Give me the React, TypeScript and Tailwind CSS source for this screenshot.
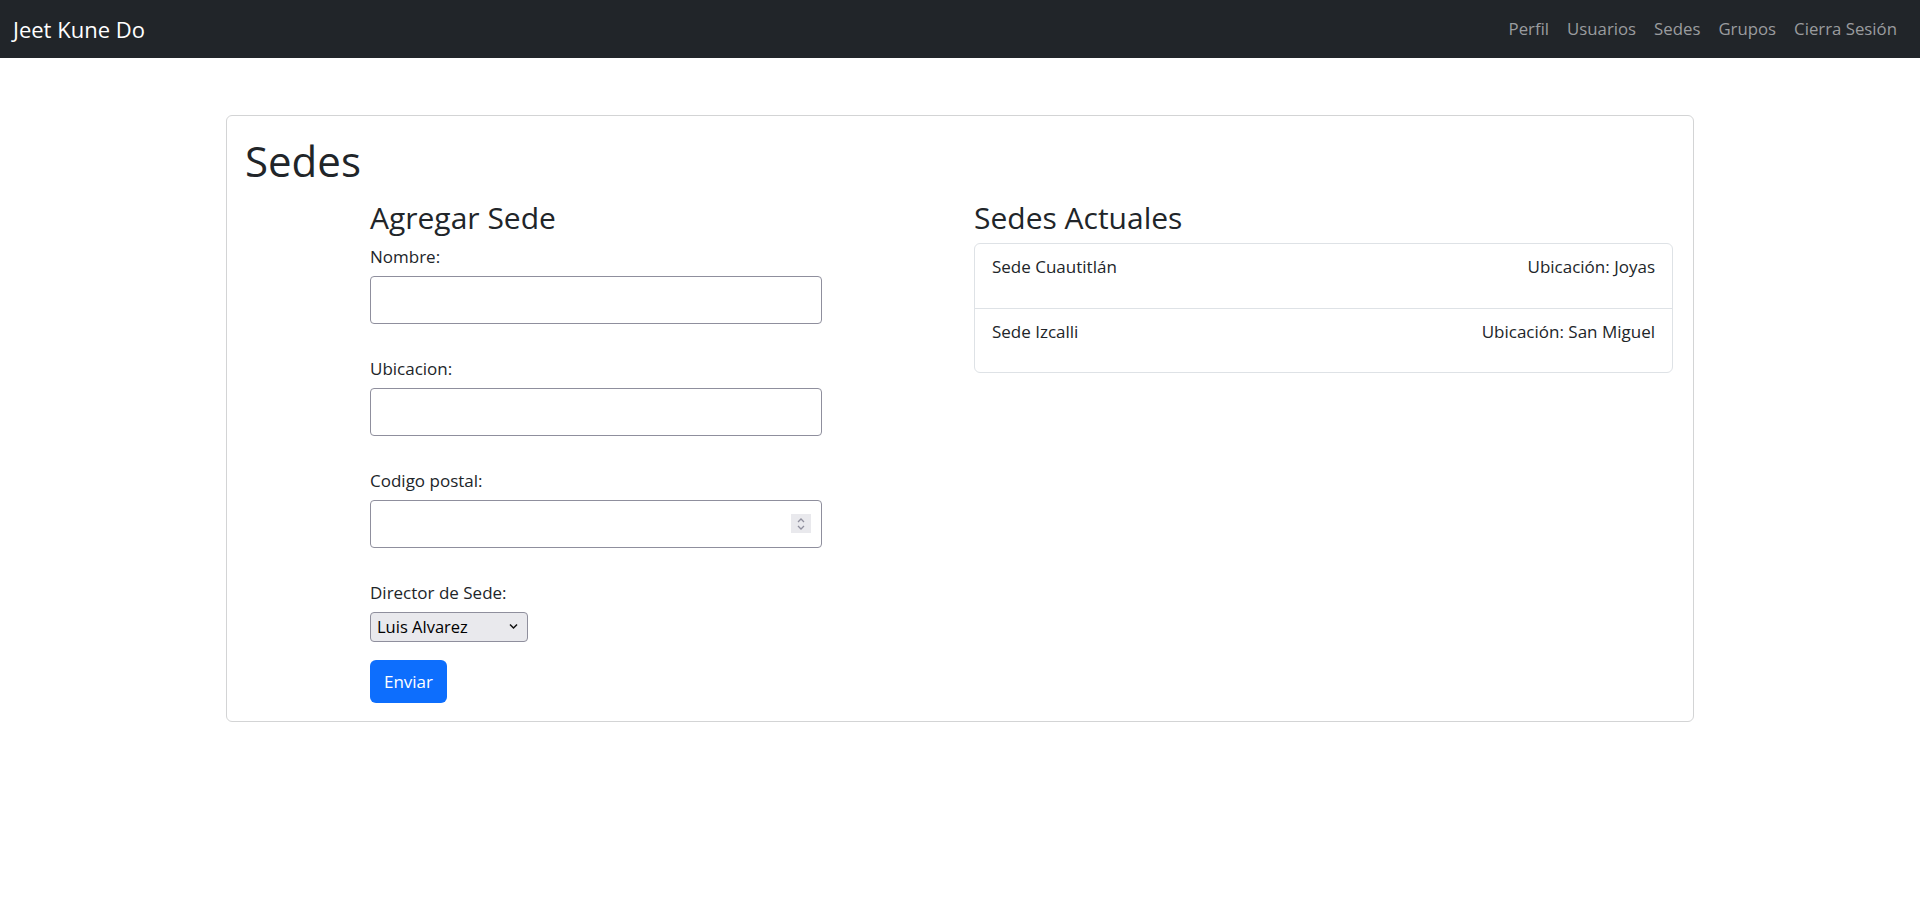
import React from 'react';

const sedes = [
  { nombre: 'Sede Cuautitlán', ubicacion: 'Joyas' },
  { nombre: 'Sede Izcalli', ubicacion: 'San Miguel' },
];

const links = ['Perfil', 'Usuarios', 'Sedes', 'Grupos', 'Cierra Sesión'];

function Navbar() {
  return (
    <nav className="flex h-[58px] items-center justify-between bg-[#212529] pl-[13px] pr-[23px]">
      <a className="text-[22px] leading-[30px] text-white">Jeet Kune Do</a>
      <div className="flex items-center gap-[18px]">
        {links.map((l) => (
          <a key={l} className="text-[16.8px] leading-[26px] text-[#9a9c9f]">
            {l}
          </a>
        ))}
      </div>
    </nav>
  );
}

function Field({ label, children }: { label: string; children: React.ReactNode }) {
  return (
    <div className="mb-[32px]">
      <label className="mb-[6px] block text-[17px] leading-[26px]">{label}</label>
      {children}
    </div>
  );
}

function TextInput() {
  return (
    <input
      type="text"
      className="block h-[48px] w-[452px] rounded-[4px] border border-[#8f8f9d] bg-white px-2 text-[17px] outline-none"
    />
  );
}

function NumberInput() {
  return (
    <div className="relative w-[452px]">
      <input
        type="text"
        className="block h-[48px] w-full rounded-[4px] border border-[#8f8f9d] bg-white px-2 text-[17px] outline-none"
      />
      <span className="absolute right-[11px] top-[14px] flex h-[19px] w-[20px] items-center justify-center bg-[#e9e9ed]">
        <svg width="10" height="14" viewBox="0 0 10 14" fill="none" stroke="#8f8f9d" strokeWidth="1.3">
          <path d="M2 5 L5 2 L8 5" />
          <path d="M2 9 L5 12 L8 9" />
        </svg>
      </span>
    </div>
  );
}

function SelectDirector() {
  return (
    <div className="relative w-[158px]">
      <select className="block h-[30px] w-full appearance-none rounded-[4px] border border-[#8f8f9d] bg-[#e9e9ed] pl-[6px] pr-6 text-[16.5px] text-black outline-none">
        <option>Luis Alvarez</option>
      </select>
      <svg
        className="pointer-events-none absolute right-[10px] top-[11px]"
        width="9"
        height="7"
        viewBox="0 0 9 7"
        fill="none"
        stroke="#111"
        strokeWidth="1.5"
      >
        <path d="M1 1.5 L4.5 5 L8 1.5" />
      </svg>
    </div>
  );
}

export default function App() {
  return (
    <div className="min-h-screen bg-white font-['Open_Sans',sans-serif] text-[#212529]">
      <Navbar />
      <main className="pt-[57px]">
        <div className="mx-auto w-[1468px] rounded-[6px] border border-[#d3d4d5] px-[18px] pb-[18px] pt-[20px]">
          <h1 className="mb-[14px] text-[42px] leading-[50px]">Sedes</h1>
          <div className="flex">
            <div className="ml-[125px] w-[452px]">
              <h3 className="mb-[8px] text-[30px] leading-[36px]">Agregar Sede</h3>
              <form onSubmit={(e) => e.preventDefault()}>
                <Field label="Nombre:">
                  <TextInput />
                </Field>
                <Field label="Ubicacion:">
                  <TextInput />
                </Field>
                <Field label="Codigo postal:">
                  <NumberInput />
                </Field>
                <label className="mb-[6px] block text-[17px] leading-[26px]">Director de Sede:</label>
                <SelectDirector />
                <button
                  type="submit"
                  className="mt-[18px] flex h-[43px] w-[77px] items-center justify-center rounded-[6px] bg-[#0d6efd] text-[17px] text-white"
                >
                  Enviar
                </button>
              </form>
            </div>
            <div className="ml-[152px] w-[699px]">
              <h3 className="mb-[7px] text-[30px] leading-[36px]">Sedes Actuales</h3>
              <ul className="rounded-[6px] border border-[#dee2e6]">
                {sedes.map((s, i) => (
                  <li
                    key={s.nombre}
                    className={`flex h-[64px] justify-between px-[17px] pt-[10px] text-[17px] leading-[26px] ${
                      i > 0 ? 'border-t border-[#dee2e6]' : ''
                    }`}
                  >
                    <span>{s.nombre}</span>
                    <span>Ubicación: {s.ubicacion}</span>
                  </li>
                ))}
              </ul>
            </div>
          </div>
        </div>
      </main>
    </div>
  );
}
